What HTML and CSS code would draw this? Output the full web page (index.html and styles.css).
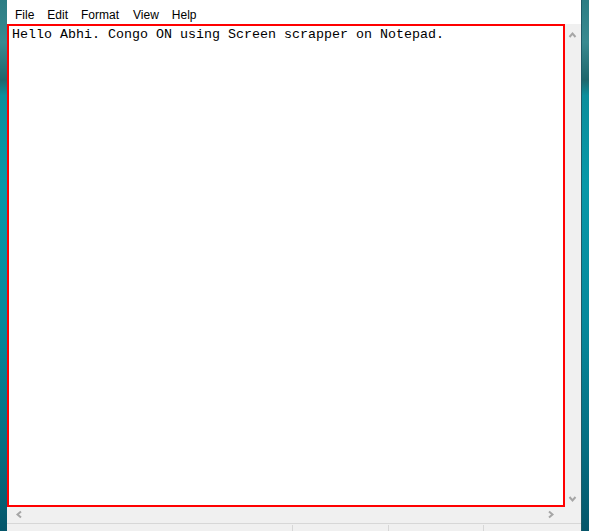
FILE: index.html
```html
<!DOCTYPE html>
<html>
<head>
<meta charset="utf-8">
<link rel="stylesheet" href="styles.css">
</head>
<body>
<div class="window">
  <div class="menubar">
    <span class="menu-item">File</span>
    <span class="menu-item">Edit</span>
    <span class="menu-item">Format</span>
    <span class="menu-item">View</span>
    <span class="menu-item">Help</span>
  </div>
  <div class="main">
    <div class="editor">Hello Abhi. Congo ON using Screen scrapper on Notepad.</div>
    <div class="vscroll">
      <svg class="arrow" width="16" height="16" viewBox="0 0 16 16"><polyline points="4.5,11 7.5,7.5 10.5,11" fill="none" stroke="#a6a6a6" stroke-width="2"/></svg>
      <svg class="arrow" width="16" height="16" viewBox="0 0 16 16"><polyline points="4.5,6 7.5,9.5 10.5,6" fill="none" stroke="#a6a6a6" stroke-width="2"/></svg>
    </div>
  </div>
  <div class="hscroll">
    <div class="htrack">
      <svg class="arrow" width="16" height="16" viewBox="0 0 16 16"><polyline points="10,4.5 6.5,7.5 10,10.5" fill="none" stroke="#a6a6a6" stroke-width="2"/></svg>
      <svg class="arrow" width="16" height="16" viewBox="0 0 16 16"><polyline points="4,4.5 7.5,7.5 4,10.5" fill="none" stroke="#a6a6a6" stroke-width="2"/></svg>
    </div>
    <div class="corner"></div>
  </div>
  <div class="statusbar">
    <div class="cell cell-1"></div>
    <div class="cell cell-2"></div>
    <div class="cell cell-3"></div>
    <div class="cell cell-4"></div>
  </div>
</div>
</body>
</html>
```
FILE: styles.css
```css
html, body {
  margin: 0;
  padding: 0;
}
body {
  width: 589px;
  height: 531px;
  overflow: hidden;
  background: linear-gradient(to bottom, #2c7d84 0%, #3a8a90 8%, #1f666c 15%, #0c8e9c 18%, #0898a8 35%, #07899c 60%, #066d80 85%, #05566a 100%);
}
.window {
  margin-left: 7px;
  width: 574px;
  height: 531px;
  background: #ffffff;
  display: flex;
  flex-direction: column;
  border-right: 1px solid #1f5a66;
}
.menubar {
  height: 24px;
  box-sizing: border-box;
  padding: 8px 0 2px 8px;
  display: flex;
  gap: 13px;
  font-family: "Liberation Sans", Arial, sans-serif;
  font-size: 12px;
  line-height: 14px;
  color: #000;
  background: #fff;
}
.menu-item:nth-child(4) { margin-left: 1px; }
.main {
  display: flex;
  height: 483px;
}
.editor {
  width: 558px;
  height: 483px;
  box-sizing: border-box;
  border: 2px solid #ff0000;
  padding: 1px 3px;
  font-family: "Liberation Mono", "DejaVu Sans Mono", monospace;
  font-size: 13.33px;
  line-height: 15px;
  color: #000;
  white-space: pre;
  background: #fff;
}
.vscroll {
  width: 16px;
  background: #f0f0f0;
  display: flex;
  flex-direction: column;
  justify-content: space-between;
  padding: 2px 0 0;
}
.arrow { display: block; }
.hscroll {
  display: flex;
  height: 16px;
}
.htrack {
  width: 558px;
  background: #f0f0f0;
  display: flex;
  justify-content: space-between;
  padding: 0 4px;
  box-sizing: border-box;
}
.corner {
  width: 16px;
  background: #f0f0f0;
}
.statusbar {
  flex: 1;
  background: #f0f0f0;
  border-top: 1px solid #d7d7d7;
  display: flex;
  padding-top: 1px;
}
.cell {
  border-right: 1px solid #d7d7d7;
  box-sizing: border-box;
}
.cell-1 { width: 286px; }
.cell-2 { width: 96px; }
.cell-3 { width: 95px; }
.cell-4 { flex: 1; border-right: none; }
```
